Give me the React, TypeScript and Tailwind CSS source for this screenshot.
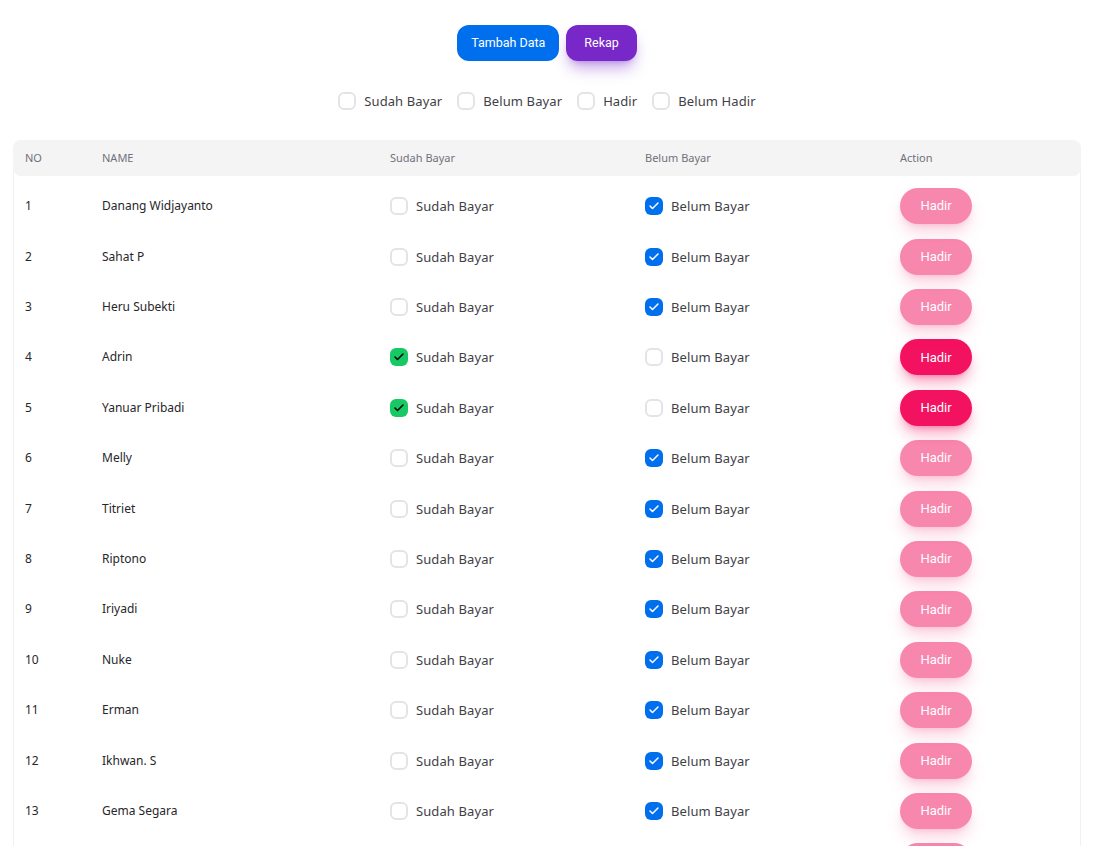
import { Check } from "lucide-react"

type Row = { name: string; paid: boolean }

const rows: Row[] = [
  { name: "Danang Widjayanto", paid: false },
  { name: "Sahat P", paid: false },
  { name: "Heru Subekti", paid: false },
  { name: "Adrin", paid: true },
  { name: "Yanuar Pribadi", paid: true },
  { name: "Melly", paid: false },
  { name: "Titriet", paid: false },
  { name: "Riptono", paid: false },
  { name: "Iriyadi", paid: false },
  { name: "Nuke", paid: false },
  { name: "Erman", paid: false },
  { name: "Ikhwan. S", paid: false },
  { name: "Gema Segara", paid: false },
  { name: "Bambang", paid: false },
  { name: "Suryani", paid: false },
]

function Box({ checked, color }: { checked?: boolean; color?: "blue" | "green" }) {
  if (!checked) {
    return <span className="block h-[18px] w-[18px] shrink-0 rounded-md border-2 border-[#e4e4e7] bg-white" />
  }
  if (color === "green") {
    return (
      <span className="flex h-[18px] w-[18px] shrink-0 items-center justify-center rounded-md bg-[#17c964]">
        <Check className="h-3 w-3 text-black" strokeWidth={3} />
      </span>
    )
  }
  return (
    <span className="flex h-[18px] w-[18px] shrink-0 items-center justify-center rounded-md bg-[#006fee]">
      <Check className="h-3 w-3 text-white" strokeWidth={3} />
    </span>
  )
}

function CheckLabel({ label, checked, color }: { label: string; checked?: boolean; color?: "blue" | "green" }) {
  return (
    <label className="flex h-[18px] items-center gap-2">
      <Box checked={checked} color={color} />
      <span className="text-[13px] leading-[18px] tracking-[0.1px] text-[#3f3f46]">{label}</span>
    </label>
  )
}

export default function App() {
  return (
    <div className="min-h-screen bg-white font-['Noto_Sans',sans-serif]">
      <div className="flex justify-center gap-[7px] pt-[25px]">
        <button className="h-9 rounded-xl bg-[#006fee] px-[14px] font-['Roboto',sans-serif] text-[12.5px] text-white">
          Tambah Data
        </button>
        <button className="h-9 rounded-xl bg-[#7828c8] px-[18px] font-['Roboto',sans-serif] text-[12.5px] text-white shadow-lg shadow-[#7828c8]/40">
          Rekap
        </button>
      </div>

      <div className="mt-[31px] flex justify-center gap-[15px]">
        <CheckLabel label="Sudah Bayar" />
        <CheckLabel label="Belum Bayar" />
        <CheckLabel label="Hadir" />
        <CheckLabel label="Belum Hadir" />
      </div>

      <div className="mx-[13px] mt-[30px] rounded-xl border border-[#f1f1f3]">
        <div className="-mx-px -mt-px grid h-9 grid-cols-[77px_288px_255px_255px_1fr] items-center rounded-lg bg-[#f4f4f5] px-3 text-[11px] text-[#71717a]">
          <div>NO</div>
          <div>NAME</div>
          <div>Sudah Bayar</div>
          <div>Belum Bayar</div>
          <div>Action</div>
        </div>
        <div className="pt-[5px]">
          {rows.map((r, i) => (
            <div
              key={i}
              className="grid h-[50.42px] grid-cols-[77px_288px_255px_255px_1fr] items-center px-[11px] text-[12px] text-[#27272a]"
            >
              <div>{i + 1}</div>
              <div>{r.name}</div>
              <div>
                <CheckLabel label="Sudah Bayar" checked={r.paid} color="green" />
              </div>
              <div>
                <CheckLabel label="Belum Bayar" checked={!r.paid} color="blue" />
              </div>
              <div>
                <button
                  className={
                    "h-9 w-[72px] rounded-full bg-[#f31260] font-['Roboto',sans-serif] text-[13px] text-white shadow-lg shadow-[#f31260]/40 " +
                    (r.paid ? "" : "opacity-50")
                  }
                >
                  Hadir
                </button>
              </div>
            </div>
          ))}
        </div>
      </div>
    </div>
  )
}
